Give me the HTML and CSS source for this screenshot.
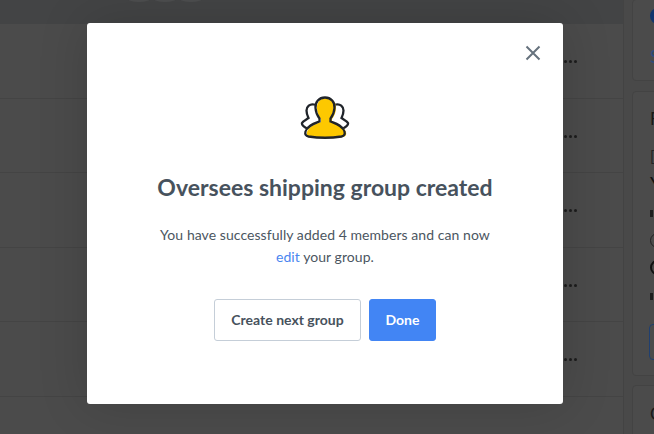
FILE: index.html
```html
<!DOCTYPE html>
<html lang="en">
<head>
  <meta charset="UTF-8" />
  <title>Group created</title>
  <link rel="stylesheet" href="styles.css">
</head>
<body>
  <div class="page">
    <div class="main">
      <div class="topbar">
        <div class="bubbles"><span></span><span></span><span></span></div>
      </div>
      <div class="row"><span class="dots"><i></i><i></i><i></i></span></div>
      <div class="row"><span class="dots"><i></i><i></i><i></i></span></div>
      <div class="row"><span class="dots"><i></i><i></i><i></i></span></div>
      <div class="row"><span class="dots"><i></i><i></i><i></i></span></div>
      <div class="row"><span class="dots"><i></i><i></i><i></i></span></div>
    </div>
    <div class="side">
      <div class="side-card card-one">
        <span class="blue-dot"></span>
        <span class="side-link">S</span>
      </div>
      <div class="side-card card-two">
        <span class="side-title">F</span>
        <span class="side-small">[</span>
        <span class="side-big">Y</span>
        <span class="side-bar"></span>
        <span class="side-ring small"></span>
        <span class="side-ring"></span>
        <span class="side-bar lower"></span>
        <span class="side-btn"></span>
      </div>
      <div class="side-card card-three">
        <span class="side-title">C</span>
      </div>
    </div>
  </div>

  <div class="modal">
    <button class="close" aria-label="Close">
      <svg width="16" height="16" viewBox="0 0 16 16"><path d="M1.500 1.500l13 13M14.500 1.500l-13 13" /></svg>
    </button>
    <svg class="group-icon" width="50" height="46" viewBox="0 0 50 46">
      <path class="back" d="M14 9.500c-4-1-7.500 2-7.500 6 0 3 1 5.500 2 7.500-2 1.500-5.500 3-6.500 5-.5 2 2 4 5 5.500" />
      <path class="back" d="M36 9.500c4-1 7.500 2 7.500 6 0 3-1 5.500-2 7.500 2 1.500 5.500 3 6.500 5 .5 2-2 4-5 5.500" />
      <path class="front-shape" d="M25 2.500c-6 0-10 4.500-9.500 10.500.3 4.500 2 8 4 10.500v3c-5 2-12 4-14 10-.8 3 .5 4.500 3 5 10 1.500 23 1.500 33 0 2.500-.5 3.800-2 3-5-2-6-9-8-14-10v-3c2-2.500 3.700-6 4-10.500.5-6-3.500-10.500-9.500-10.500z" />
      <path class="front-fill" d="M25 2.500c-6 0-10 4.500-9.500 10.500.3 4.500 2 8 4 10.500v3c-5 2-12 4-14 10-.8 3 .5 4.500 3 5 10 1.500 23 1.500 33 0 2.500-.5 3.800-2 3-5-2-6-9-8-14-10v-3c2-2.500 3.700-6 4-10.500.5-6-3.500-10.500-9.500-10.500z" />
      <path class="front-line" d="M25 2.500c-6 0-10 4.500-9.500 10.500.3 4.500 2 8 4 10.500v3c-5 2-12 4-14 10-.8 3 .5 4.500 3 5 10 1.500 23 1.500 33 0 2.500-.5 3.800-2 3-5-2-6-9-8-14-10v-3c2-2.500 3.700-6 4-10.500.5-6-3.500-10.500-9.500-10.500z" />
    </svg>
    <h2 class="modal-title">Oversees shipping group created</h2>
    <p class="modal-text">You have successfully added 4 members and can now<br><a href="#">edit</a> your group.</p>
    <div class="actions">
      <button class="btn btn-light">Create next group</button>
      <button class="btn btn-blue">Done</button>
    </div>
  </div>
</body>
</html>
```

FILE: styles.css
```css
* {
  box-sizing: border-box;
}

html, body {
  margin: 0;
  height: 100%;
  overflow: hidden;
}

body {
  font-family: "Lato", "Noto Sans", sans-serif;
  background: #484848;
  color: #414c57;
}

.page {
  display: flex;
  height: 434px;
}

.main {
  width: 624px;
  flex-shrink: 0;
  background: #4b4b4b;
  border-right: 1px solid #434343;
}

.topbar {
  height: 24px;
  background: #434445;
  display: flex;
  justify-content: center;
  padding-right: 289px;
}

.bubbles {
  display: flex;
  margin-top: -4px;
}

.bubbles span {
  width: 22px;
  height: 6px;
  background: #4d4e4f;
  border-radius: 50%;
  margin-right: 4px;
}

.row {
  height: 74.500px;
  border-bottom: 1px solid #444;
  display: flex;
  justify-content: flex-end;
  align-items: center;
  padding-top: 2px;
  padding-right: 46px;
}

.dots {
  display: flex;
  gap: 2px;
}

.dots i {
  width: 3px;
  height: 3px;
  border-radius: 50%;
  background: #1c1c1c;
}

.side {
  flex: 1;
  min-width: 0;
  overflow: hidden;
  background: #494949;
  padding-left: 8px;
}

.side-card {
  background: #4b4b4b;
  border: 1px solid #434343;
  border-radius: 4px;
  padding-left: 17px;
  width: 40px;
  display: flex;
  flex-direction: column;
  align-items: flex-start;
}

.card-one {
  height: 82px;
  margin-top: -1px;
  padding-top: 8px;
}

.card-two {
  height: 285px;
  margin-top: 10px;
  padding-top: 17px;
}

.card-three {
  height: 60px;
  margin-top: 9px;
  padding-top: 18px;
}

.blue-dot {
  width: 16px;
  height: 16px;
  flex-shrink: 0;
  border-radius: 50%;
  background: #12356e;
}

.side-link {
  margin-top: 23px;
  font-size: 17px;
  line-height: 20px;
  color: #2a4a80;
}

.side-title {
  font-size: 17px;
  line-height: 20px;
  color: #191919;
}

.side-small {
  font-size: 15px;
  line-height: 18px;
  color: #242424;
  margin-top: 18px;
}

.side-big {
  font-size: 19px;
  line-height: 22px;
  color: #111;
  margin-top: 8px;
}

.side-bar {
  width: 3px;
  height: 7px;
  flex-shrink: 0;
  background: #1e1e1e;
  margin-top: 15px;
}

.side-bar.lower {
  margin-top: 18px;
}

.side-ring {
  width: 15px;
  height: 15px;
  flex-shrink: 0;
  border: 2px solid #111;
  border-radius: 50%;
  margin-top: 12px;
}

.side-ring.small {
  border-width: 1px;
  border-color: #222;
  margin-top: 16px;
}

.side-btn {
  width: 20px;
  height: 36px;
  flex-shrink: 0;
  border: 1px solid #1f3f70;
  border-radius: 4px;
  margin-top: 24px;
  margin-left: -1px;
}

.modal {
  position: absolute;
  left: 87px;
  top: 23px;
  width: 476px;
  height: 381px;
  background: #fff;
  border-radius: 3px;
  box-shadow: 0 0 50px rgba(0, 0, 0, 0.16);
  padding-top: 72px;
  text-align: center;
}

.close {
  position: absolute;
  top: 22px;
  right: 22px;
  width: 16px;
  height: 16px;
  padding: 0;
  border: 0;
  background: none;
  display: flex;
}

.close path {
  stroke: #66727d;
  stroke-width: 2;
  fill: none;
}

.group-icon {
  display: block;
  margin: 0 auto;
}

.group-icon .back {
  fill: #fff;
  stroke: #20242a;
  stroke-width: 2.300;
  stroke-linecap: round;
}

.group-icon .front-shape {
  fill: #fff;
}

.group-icon .front-fill {
  fill: #fdc800;
  transform: translate(1.500px, 0.500px);
}

.group-icon .front-line {
  fill: none;
  stroke: #20242a;
  stroke-width: 2.300;
}

.modal-title {
  margin: 31px 0 0;
  font-size: 23px;
  line-height: 30px;
  font-weight: 700;
  color: #47525d;
}

.modal-text {
  margin: 22px 0 0;
  font-size: 14px;
  letter-spacing: 0.06px;
  line-height: 22px;
  color: #4b5661;
}

.modal-text a {
  color: #4a86f0;
  text-decoration: none;
}

.actions {
  display: flex;
  justify-content: center;
  gap: 8px;
  margin-top: 31px;
}

.btn {
  height: 42px;
  padding-bottom: 3px;
  border-radius: 3px;
  font-family: inherit;
  font-size: 14px;
  font-weight: 700;
}

.btn-light {
  width: 147px;
  background: #fff;
  border: 1px solid #c5ced8;
  color: #47525d;
}

.btn-blue {
  width: 67px;
  background: #4285f4;
  border: 1px solid #4285f4;
  color: #fff;
}
```
